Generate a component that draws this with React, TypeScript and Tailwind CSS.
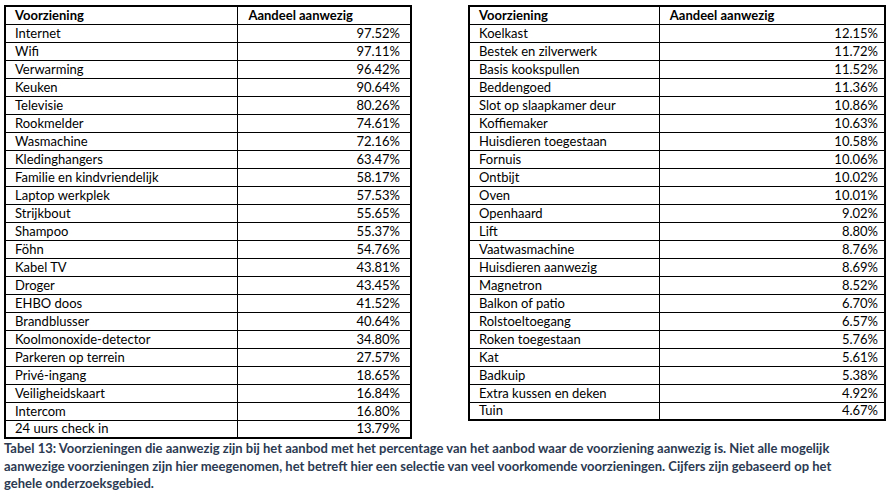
import React from 'react';

type Row = [string, string];

const left: Row[] = [
  ['Internet', '97.52%'],
  ['Wifi', '97.11%'],
  ['Verwarming', '96.42%'],
  ['Keuken', '90.64%'],
  ['Televisie', '80.26%'],
  ['Rookmelder', '74.61%'],
  ['Wasmachine', '72.16%'],
  ['Kledinghangers', '63.47%'],
  ['Familie en kindvriendelijk', '58.17%'],
  ['Laptop werkplek', '57.53%'],
  ['Strijkbout', '55.65%'],
  ['Shampoo', '55.37%'],
  ['Föhn', '54.76%'],
  ['Kabel TV', '43.81%'],
  ['Droger', '43.45%'],
  ['EHBO doos', '41.52%'],
  ['Brandblusser', '40.64%'],
  ['Koolmonoxide-detector', '34.80%'],
  ['Parkeren op terrein', '27.57%'],
  ['Privé-ingang', '18.65%'],
  ['Veiligheidskaart', '16.84%'],
  ['Intercom', '16.80%'],
  ['24 uurs check in', '13.79%'],
];

const right: Row[] = [
  ['Koelkast', '12.15%'],
  ['Bestek en zilverwerk', '11.72%'],
  ['Basis kookspullen', '11.52%'],
  ['Beddengoed', '11.36%'],
  ['Slot op slaapkamer deur', '10.86%'],
  ['Koffiemaker', '10.63%'],
  ['Huisdieren toegestaan', '10.58%'],
  ['Fornuis', '10.06%'],
  ['Ontbijt', '10.02%'],
  ['Oven', '10.01%'],
  ['Openhaard', '9.02%'],
  ['Lift', '8.80%'],
  ['Vaatwasmachine', '8.76%'],
  ['Huisdieren aanwezig', '8.69%'],
  ['Magnetron', '8.52%'],
  ['Balkon of patio', '6.70%'],
  ['Rolstoeltoegang', '6.57%'],
  ['Roken toegestaan', '5.76%'],
  ['Kat', '5.61%'],
  ['Badkuip', '5.38%'],
  ['Extra kussen en deken', '4.92%'],
  ['Tuin', '4.67%'],
];

const DataTable: React.FC<{ rows: Row[]; col1: string; col2: string; padR: string }> = ({ rows, col1, col2, padR }) => (
  <table className="border-collapse border-2 border-black text-[13px] leading-none text-black">
    <colgroup>
      <col className={col1} />
      <col className={col2} />
    </colgroup>
    <thead>
      <tr className="h-[18px]">
        <th className="border border-black pl-[9px] text-left font-bold">Voorziening</th>
        <th className="border border-black pl-[10px] text-left font-bold">Aandeel aanwezig</th>
      </tr>
    </thead>
    <tbody>
      {rows.map((r, i) => (
        <tr key={i} className="h-[18px]">
          <td className="border border-black pl-[9px]">{r[0]}</td>
          <td className={`border border-black text-right ${padR}`}>{r[1]}</td>
        </tr>
      ))}
    </tbody>
  </table>
);

export default function App() {
  return (
    <div className="w-[886px] h-[499px] bg-white pt-[5px] pl-[4px]" style={{ fontFamily: 'Lato, "Liberation Sans", sans-serif' }}>
      <div className="flex items-start gap-[56px]">
        <DataTable rows={left} col1="w-[234px]" col2="w-[174px]" padR="pr-[10px]" />
        <DataTable rows={right} col1="w-[191px]" col2="w-[227px]" padR="pr-[6px]" />
      </div>
      <p className="mt-[1px] text-[13px] font-bold leading-[17.5px] text-[#2c3a52] whitespace-nowrap">
        Tabel 13: Voorzieningen die aanwezig zijn bij het aanbod met het percentage van het aanbod waar de voorziening aanwezig is. Niet alle mogelijk
        <br />
        aanwezige voorzieningen zijn hier meegenomen, het betreft hier een selectie van veel voorkomende voorzieningen. Cijfers zijn gebaseerd op het
        <br />
        gehele onderzoeksgebied.
      </p>
    </div>
  );
}
